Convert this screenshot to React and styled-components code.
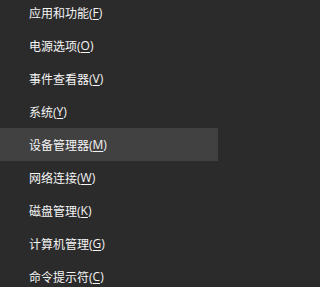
import React from "react"
import styled, { createGlobalStyle } from "styled-components"

const GlobalStyle = createGlobalStyle`
  html, body {
    margin: 0;
    padding: 0;
    background: #2b2b2b;
  }
`

const Menu = styled.ul`
  list-style: none;
  margin: -4px 0 0 0;
  padding: 0;
  width: 218px;
  height: 291px;
  background: #2b2b2b;
  overflow: hidden;
  font-family: "Open Sans", "Noto Sans CJK SC", sans-serif;
  font-size: 12px;
  color: #f5f5f5;
`

const Item = styled.li`
  display: flex;
  align-items: center;
  height: 33px;
  padding-left: 29px;
  background: ${(p) => (p.$active ? "#414141" : "transparent")};
  white-space: nowrap;
`

const Key = styled.span`
  text-decoration: underline;
  text-underline-offset: 2px;
  text-decoration-thickness: 1px;
`

const items = [
  ["应用和功能", "F"],
  ["电源选项", "O"],
  ["事件查看器", "V"],
  ["系统", "Y"],
  ["设备管理器", "M"],
  ["网络连接", "W"],
  ["磁盘管理", "K"],
  ["计算机管理", "G"],
  ["命令提示符", "C"],
]

const App = () => {
  return (
    <>
      <GlobalStyle />
      <Menu>
        {items.map(([label, key], i) => (
          <Item key={label} $active={i === 4}>
            {label}(<Key>{key}</Key>)
          </Item>
        ))}
      </Menu>
    </>
  )
}

export default App
